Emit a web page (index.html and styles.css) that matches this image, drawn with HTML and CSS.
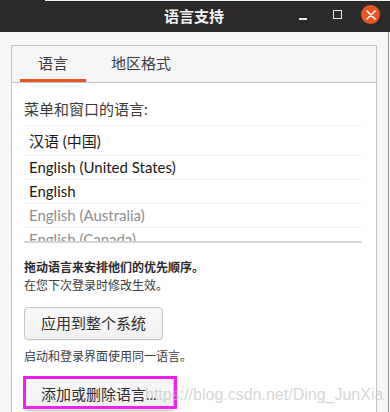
FILE: index.html
```html
<!DOCTYPE html>
<html lang="zh">
<head>
<meta charset="utf-8">
<title>语言支持</title>
<link rel="stylesheet" href="styles.css">
</head>
<body>
<div class="screen">
  <header class="titlebar">
    <div class="title">语言支持</div>
    <div class="controls">
      <span class="ctl ctl-min"></span>
      <span class="ctl ctl-max"></span>
      <span class="ctl ctl-close">
        <svg width="10" height="10" viewBox="0 0 10 10"><path d="M1 1 L9 9 M9 1 L1 9" stroke="#fff" stroke-width="1.6" stroke-linecap="round"/></svg>
      </span>
    </div>
  </header>
  <div class="window">
    <div class="main">
      <div class="notebook">
        <div class="tabs">
          <div class="tab active">语言</div>
          <div class="tab">地区格式</div>
        </div>
        <div class="page">
          <div class="label">菜单和窗口的语言:</div>
          <div class="list">
            <div class="row first">汉语 (中国)</div>
            <div class="row">English (United States)</div>
            <div class="row">English</div>
            <div class="row dim">English (Australia)</div>
            <div class="row dim">English (Canada)</div>
          </div>
          <div class="hint bold">拖动语言来安排他们的优先顺序。</div>
          <div class="hint">在您下次登录时修改生效。</div>
          <button class="btn btn-apply">应用到整个系统</button>
          <div class="hint hint-login">启动和登录界面使用同一语言。</div>
          <button class="btn btn-add">添加或删除语言...</button>
        </div>
      </div>
    </div>
    <div class="edge"></div>
    <div class="outside"></div>
  </div>
  <div class="highlight"></div>
  <div class="watermark">https://blog.csdn.net/Ding_JunXia</div>
</div>
</body>
</html>
```
FILE: styles.css
```css
* { box-sizing: border-box; }
html, body { margin: 0; padding: 0; }
body {
  width: 390px;
  height: 412px;
  overflow: hidden;
  background: #f6f6f6;
  font-family: "Lato", "Noto Sans CJK SC", sans-serif;
  color: #3c3c3c;
}
.screen {
  position: relative;
  width: 390px;
  height: 412px;
  overflow: hidden;
  display: flex;
  flex-direction: column;
}
.titlebar {
  position: relative;
  height: 32px;
  flex: none;
  background: #2c2a2a;
  display: flex;
  align-items: center;
  justify-content: center;
}
.titlebar::before {
  content: "";
  position: absolute;
  left: 45px;
  right: 0;
  top: 0;
  height: 1px;
  background: #f2f2f2;
}
.title {
  color: #f2f2f2;
  font-weight: bold;
  font-size: 15px;
  line-height: 20px;
  margin-top: 0;
  margin-left: -2px;
}
.controls {
  position: absolute;
  top: 0;
  right: 0;
  height: 32px;
  display: flex;
  align-items: center;
}
.ctl { display: block; flex: none; }
.ctl-min {
  width: 8px;
  height: 1.5px;
  background: #e8e8e8;
  margin-top: 6px;
}
.ctl-max {
  width: 9px;
  height: 9px;
  border: 1.5px solid #e8e8e8;
  margin-left: 26px;
  margin-top: -3px;
}
.ctl-close {
  width: 19px;
  height: 19px;
  border-radius: 50%;
  background: #e95420;
  margin-left: 19px;
  margin-right: 10px;
  margin-top: -3px;
  display: flex;
  align-items: center;
  justify-content: center;
}
.window {
  flex: 1;
  display: flex;
  min-height: 0;
}
.main {
  flex: 1;
  background: #f6f6f6;
  padding: 13px 0 0 11px;
  min-width: 0;
}
.edge { width: 1px; background: #8e8e8e; flex: none; }
.outside { width: 1px; background: #ffffff; flex: none; }
.notebook {
  width: 366px;
  height: 400px;
  border: 1px solid #c3c3c3;
  display: flex;
  flex-direction: column;
}
.tabs {
  height: 37px;
  flex: none;
  display: flex;
  align-items: stretch;
  padding-left: 8px;
  gap: 7px;
  background: #f6f6f6;
  border-bottom: 1px solid #c3c3c3;
}
.tab {
  padding: 1px 18px 0 18px;
  font-size: 15px;
  line-height: 33px;
  color: #3c3c3c;
  border-bottom: 3px solid transparent;
}
.tab.active { border-bottom-color: #e95420; }
.page {
  flex: 1;
  background: #ffffff;
  padding: 15px 12px 0 12px;
  display: flex;
  flex-direction: column;
  align-items: flex-start;
}
.label {
  font-size: 15px;
  line-height: 22px;
  color: #3c3c3c;
}
.list {
  width: 338px;
  height: 118px;
  margin-top: 5px;
  overflow: hidden;
  border-top: 1px solid #eeeeee;
  border-bottom: 2px solid #d6d6d6;
  flex: none;
}
.row {
  height: 24px;
  line-height: 23px;
  border-bottom: 1px solid #f0f0f0;
  padding-left: 5px;
  font-size: 15px;
  color: #1a1a1a;
  white-space: nowrap;
}
.row.first {
  height: 30px;
  padding-top: 4px;
}
.row.dim { color: #8f8f8f; }
.hint {
  font-size: 12px;
  line-height: 18px;
  color: #3c3c3c;
}
.hint.bold {
  font-weight: bold;
  color: #2a2a2a;
  margin-top: 16px;
}
.btn {
  font-family: inherit;
  font-size: 15px;
  color: #2e2e2e;
  height: 33px;
  padding: 0 16px;
  background: linear-gradient(#f8f8f8, #f1f1f1);
  border: 1px solid #c6c6c6;
  border-radius: 4px;
  box-shadow: 0 1px 0 rgba(0,0,0,0.05);
  line-height: 31px;
  margin: 0;
  flex: none;
}
.btn-apply { margin-top: 12px; width: 139px; }
.hint-login { margin-top: 8px; }
.btn-add { margin-top: 12px; width: 150px; text-align: left; }
.highlight {
  position: absolute;
  left: 23px;
  top: 376px;
  width: 154px;
  height: 33px;
  border: 3px solid #f01ff0;
}
.watermark {
  position: absolute;
  left: 145px;
  top: 385px;
  font-family: "Liberation Sans", Arial, sans-serif;
  font-size: 16px;
  line-height: 20px;
  color: rgba(190, 190, 190, 0.65);
  white-space: nowrap;
}
```
